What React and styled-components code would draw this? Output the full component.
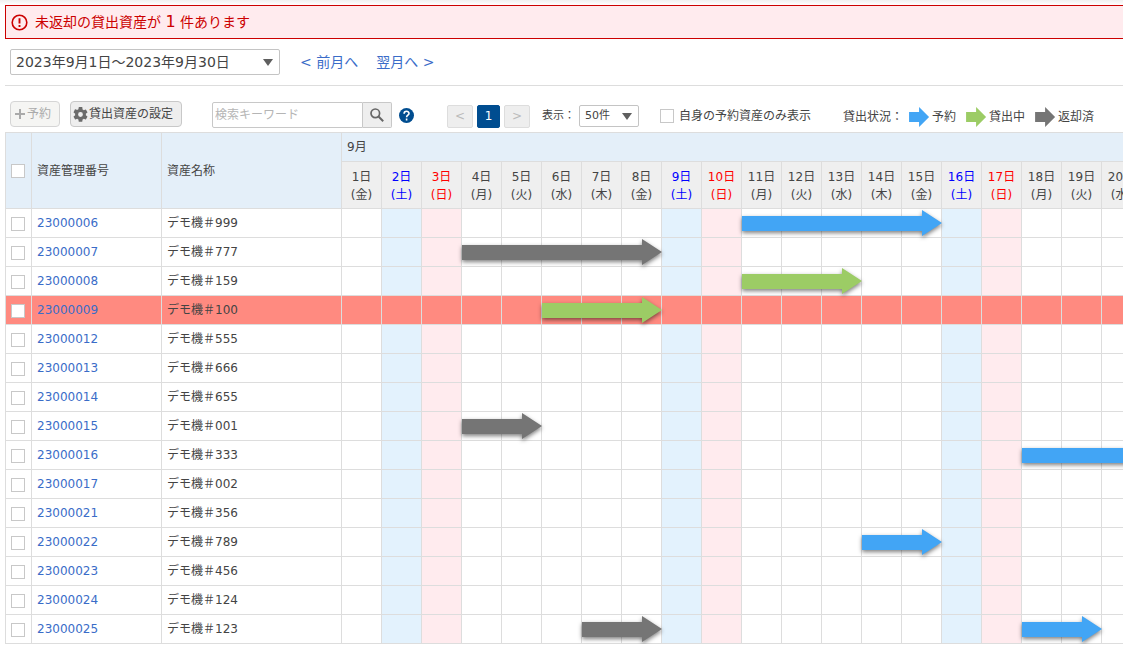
import React, { useState } from 'react';
import styled, { createGlobalStyle } from 'styled-components';

const GlobalStyle = createGlobalStyle`
  *, *::before, *::after {
    box-sizing: border-box;
  }

  body {
    margin: 0;
    background: #fff;
    color: #444;
    font-family: 'DejaVu Sans', 'Noto Sans CJK JP', sans-serif;
    font-size: 12px;
    line-height: 18px;
    overflow-x: hidden;
  }

  button, input, select {
    font: inherit;
    color: inherit;
  }
`

const Page = styled.div`
  padding: 5px 0 13px 5px;
  background: linear-gradient(#f0f0f0, #fff 5px);
`

const Alert = styled.div`
  display: flex;
  align-items: center;
  gap: 7px;
  height: 34px;
  padding: 0 5px;
  border: 1px solid #c00;
  border-right: none;
  background: #ffebee;
  color: #c00;
  font-size: 14px;

  p {
    margin: 0;
  }

  b {
    font-size: 16px;
    font-weight: normal;
  }
`

const PeriodBar = styled.div`
  display: flex;
  align-items: center;
  height: 47px;
  padding-left: 5px;
  border-bottom: 1px solid #ddd;
  font-size: 14px;
`

const SelectBox = styled.div`
  position: relative;
  width: ${props => props.$width}px;

  select {
    display: block;
    appearance: none;
    width: 100%;
    height: ${props => props.$height}px;
    padding: 0 5px;
    border: 1px solid #c4c4c4;
    border-radius: 2px;
    background: #fff;
  }

  &::after {
    content: '';
    position: absolute;
    right: 7px;
    top: 50%;
    margin-top: -3px;
    border: 5px solid transparent;
    border-top: 7px solid #5f5f5f;
    border-bottom: none;
    pointer-events: none;
  }
`

const MonthLinks = styled.nav`
  display: flex;
  gap: 18px;
  margin-left: 20px;
`

const Link = styled.a`
  color: #3a6cc8;
  text-decoration: none;
`

const Toolbar = styled.div`
  display: flex;
  align-items: center;
  height: 46px;
  padding: 14px 0 0 5px;
  white-space: nowrap;
`

const ToolButton = styled.button`
  display: flex;
  align-items: center;
  gap: 1px;
  height: 26px;
  margin: 0 10px 4px 0;
  padding: 0 8px 0 ${props => props.$wide ? 2 : 3}px;
  border: 1px solid #c8c8c8;
  border-radius: 4px;
  background: #eee;

  &:disabled {
    background: #f5f5f3;
    border-color: #d5d5d5;
    color: #aaa;
  }
`

const Search = styled.form`
  display: flex;
  margin: 0 7px 2px 20px;

  input {
    width: 151px;
    height: 26px;
    padding: 0 2px;
    border: 1px solid #c8c8c8;
    border-radius: 2px 0 0 2px;
  }

  input::placeholder {
    color: #b5b5b5;
  }

  button {
    display: flex;
    align-items: center;
    justify-content: center;
    width: 29px;
    padding: 0;
    border: 1px solid #c8c8c8;
    border-left: none;
    border-radius: 0 2px 2px 0;
    background: #eee;
  }
`

const HelpButton = styled.button`
  display: flex;
  margin-bottom: 2px;
  padding: 0;
  border: none;
  background: none;
`

const Pager = styled.div`
  display: flex;
  gap: 4px;
  margin: 0 12px 0 33px;
`

const PageButton = styled.button`
  width: ${props => props.$current ? 23 : 26}px;
  height: 23px;
  padding: 0;
  border: 1px solid ${props => props.$current ? '#004d90' : '#ddd'};
  border-radius: 2px;
  background: ${props => props.$current ? '#004d90' : '#eee'};
  color: ${props => props.$current ? '#fff' : '#bbb'};
`

const PageSize = styled.div`
  display: flex;
  align-items: center;
  gap: 4px;
  font-size: 11px;
`

const Checkbox = styled.input`
  display: block;
  appearance: none;
  width: 14px;
  height: 14px;
  margin: 0;
  border: 1px solid #c8c8c8;
  background: #fff;

  &:checked {
    background: #004d90;
    box-shadow: inset 0 0 0 2px #fff;
  }
`

const OwnOnly = styled.label`
  display: flex;
  align-items: center;
  gap: 5px;
  margin-left: 21px;
`

const Legend = styled.div`
  display: flex;
  align-items: center;
  gap: 10px;
  margin: 2px 0 0 32px;

  > span:first-child {
    margin-right: -4px;
  }
`

const LegendItem = styled.span`
  display: flex;
  align-items: center;
  gap: 3px;
`

const Chart = styled.div`
  overflow: hidden;
`

const Table = styled.table`
  table-layout: fixed;
  width: 1537px;
  border-collapse: separate;
  border-spacing: 0;

  th, td {
    padding: 0 5px;
    border: 0 solid #ddd;
    border-width: 0 1px 1px 0;
    font-weight: normal;
    text-align: left;
  }

  tr > .check {
    border-left-width: 1px;
  }

  thead tr:first-child th {
    border-top-width: 1px;
    background: #e4eff9;
  }

  thead tr:first-child {
    height: 30px;
  }

  thead tr:last-child {
    height: 47px;
  }
`

const textColors = { sat: '#00f', sun: '#f00' }
const cellColors = { sat: '#e3f2fd', sun: '#ffebee' }

const DayHead = styled.th`
  && {
    padding: 2px 0 0;
    text-align: center;
  }
  background: #efefef;
  color: ${props => textColors[props.$kind] || '#444'};
`

const Row = styled.tr`
  height: 29px;
  background: ${props => props.$overdue ? '#ff8a80' : '#fff'};

  .check {
    padding-top: 2px;
  }
`

const DayCell = styled.td`
  && {
    position: relative;
    padding: 0;
  }
  background: ${props => !props.$overdue && cellColors[props.$kind]};
`

const Lane = styled.div`
  position: absolute;
  z-index: 1;
  top: 1px;
  left: 0;
  width: ${props => props.$days * 40}px;
  filter: drop-shadow(0 2px 2px rgba(0, 0, 0, 0.5));
`

const Arrow = styled.div`
  height: 26px;
  background: ${props => props.$color};
  clip-path: polygon(0 6px, calc(100% - 20px) 6px, calc(100% - 20px) 0, 100% 13px,
    calc(100% - 20px) 100%, calc(100% - 20px) 21px, 0 21px);
`

const LegendArrow = styled.span`
  width: 20px;
  height: 20px;
  background: ${props => props.$color};
  clip-path: polygon(0 5px, 10px 5px, 10px 0, 100% 50%, 10px 100%, 10px 15px, 0 15px);
`

const colors = { reserved: '#42a5f5', lent: '#9ccc65', returned: '#757575' }
const week = ['木', '金', '土', '日', '月', '火', '水']

const days = Array.from({ length: 30 }, (_, i) => {
  const name = week[(i + 1) % 7]
  return { day: i + 1, name, kind: name === '土' ? 'sat' : name === '日' ? 'sun' : 'week' }
})

const assets = [
  { id: '23000006', name: 'デモ機＃999', loans: [{ start: 11, days: 5, status: 'reserved' }] },
  { id: '23000007', name: 'デモ機＃777', loans: [{ start: 4, days: 5, status: 'returned' }] },
  { id: '23000008', name: 'デモ機＃159', loans: [{ start: 11, days: 3, status: 'lent' }] },
  { id: '23000009', name: 'デモ機＃100', overdue: true, loans: [{ start: 6, days: 3, status: 'lent' }] },
  { id: '23000012', name: 'デモ機＃555', loans: [] },
  { id: '23000013', name: 'デモ機＃666', loans: [] },
  { id: '23000014', name: 'デモ機＃655', loans: [] },
  { id: '23000015', name: 'デモ機＃001', loans: [{ start: 4, days: 2, status: 'returned' }] },
  { id: '23000016', name: 'デモ機＃333', loans: [{ start: 18, days: 5, status: 'reserved' }] },
  { id: '23000017', name: 'デモ機＃002', loans: [] },
  { id: '23000021', name: 'デモ機＃356', loans: [] },
  { id: '23000022', name: 'デモ機＃789', loans: [{ start: 14, days: 2, status: 'reserved' }] },
  { id: '23000023', name: 'デモ機＃456', loans: [] },
  { id: '23000024', name: 'デモ機＃124', loans: [] },
  { id: '23000025', name: 'デモ機＃123', loans: [{ start: 7, days: 2, status: 'returned' }, { start: 18, days: 2, status: 'reserved' }] },
]

function AlertIcon(){
  return(
    <svg width="17" height="17" viewBox="0 0 17 17" fill="none" stroke="#c00">
      <circle cx="8.5" cy="8.5" r="7.3" strokeWidth="1.6" />
      <path d="M8.5 4.2v5.2M8.5 11v1.9" strokeWidth="1.9" />
    </svg>
  )
}

function PlusIcon(){
  return(
    <svg width="12" height="12" viewBox="0 0 12 12" stroke="#aaa" strokeWidth="2">
      <path d="M6 1v10M1 6h10" />
    </svg>
  )
}

function GearIcon(){
  return(
    <svg width="15" height="15" viewBox="2 2 20 20" fill="#6b6b6b">
      <path d="M19.14 12.94c.04-.3.06-.61.06-.94s-.02-.64-.07-.94l2.03-1.58a.49.49 0 0 0 .12-.61l-1.92-3.32a.49.49 0 0 0-.59-.22l-2.39.96a7 7 0 0 0-1.62-.94l-.36-2.54A.48.48 0 0 0 13.92 2h-3.84a.48.48 0 0 0-.47.41l-.36 2.54c-.59.24-1.13.57-1.62.94l-2.39-.96a.48.48 0 0 0-.59.22L2.74 8.87a.48.48 0 0 0 .12.61l2.03 1.58c-.05.3-.09.63-.09.94s.02.64.07.94l-2.03 1.58a.49.49 0 0 0-.12.61l1.92 3.32c.12.22.37.29.59.22l2.39-.96c.5.38 1.03.7 1.62.94l.36 2.54c.05.24.24.41.48.41h3.84c.24 0 .44-.17.47-.41l.36-2.54a7 7 0 0 0 1.62-.94l2.39.96c.22.08.47 0 .59-.22l1.92-3.32a.48.48 0 0 0-.12-.61zM12 15.2a3.2 3.2 0 1 1 0-6.4 3.2 3.2 0 0 1 0 6.4" />
    </svg>
  )
}

function SearchIcon(){
  return(
    <svg width="14" height="14" viewBox="0 0 14 14" fill="none" stroke="#666">
      <circle cx="5.3" cy="5.3" r="4.3" strokeWidth="1.7" />
      <path d="M8.5 8.5l4.7 4.7" strokeWidth="2" />
    </svg>
  )
}

function HelpIcon(){
  return(
    <svg width="15" height="15" viewBox="0 0 15 15">
      <circle cx="7.5" cy="7.5" r="7.5" fill="#004d90" />
      <path d="M5.1 5.7c0-3.3 4.9-3.1 4.9-.3 0 1.8-2.4 1.9-2.4 3.9M7.6 10.5v1.9" fill="none" stroke="#fff" strokeWidth="1.6" />
    </svg>
  )
}

function AssetRow({ asset, checked, onCheck }){
  return(
    <Row $overdue={asset.overdue}>
      <td className='check'>
        <Checkbox type='checkbox' aria-label={asset.id} checked={checked} onChange={() => onCheck(asset.id)} />
      </td>
      <td><Link href='#'>{asset.id}</Link></td>
      <td>{asset.name}</td>
      {days.map(({ day, kind }) => {
        const loan = asset.loans.find(x => x.start === day)
        return(
          <DayCell key={day} $kind={kind} $overdue={asset.overdue}>
            {loan && <Lane $days={loan.days}><Arrow $color={colors[loan.status]} /></Lane>}
          </DayCell>
        )
      })}
    </Row>
  )
}

function App(){
  const [selected, setSelected] = useState([])
  const [keyword, setKeyword] = useState('')
  const [ownOnly, setOwnOnly] = useState(false)

  function handleCheck(id){
    setSelected(selected.includes(id) ? selected.filter(x => x !== id) : [...selected, id])
  }

  function handleCheckAll(e){
    setSelected(e.target.checked ? assets.map(x => x.id) : [])
  }

  return(
    <Page>
      <GlobalStyle />
      <Alert role='alert'>
        <AlertIcon />
        <p>未返却の貸出資産が <b>1</b> 件あります</p>
      </Alert>

      <PeriodBar>
        <SelectBox $width={270} $height={26}>
          <select aria-label='期間'>
            <option>2023年9月1日～2023年9月30日</option>
          </select>
        </SelectBox>
        <MonthLinks>
          <Link href='#'>&lt; 前月へ</Link>
          <Link href='#'>翌月へ &gt;</Link>
        </MonthLinks>
      </PeriodBar>

      <Toolbar>
        <ToolButton disabled><PlusIcon />予約</ToolButton>
        <ToolButton $wide><GearIcon />貸出資産の設定</ToolButton>
        <Search onSubmit={e => e.preventDefault()}>
          <input type='text' aria-label='検索キーワード' placeholder='検索キーワード' value={keyword} onChange={e => setKeyword(e.target.value)} />
          <button aria-label='検索'><SearchIcon /></button>
        </Search>
        <HelpButton aria-label='ヘルプ'><HelpIcon /></HelpButton>
        <Pager>
          <PageButton disabled>&lt;</PageButton>
          <PageButton $current>1</PageButton>
          <PageButton disabled>&gt;</PageButton>
        </Pager>
        <PageSize>
          <label htmlFor='size'>表示：</label>
          <SelectBox $width={60} $height={22}>
            <select id='size'>
              <option>50件</option>
            </select>
          </SelectBox>
        </PageSize>
        <OwnOnly>
          <Checkbox type='checkbox' checked={ownOnly} onChange={e => setOwnOnly(e.target.checked)} />
          自身の予約資産のみ表示
        </OwnOnly>
        <Legend>
          <span>貸出状況：</span>
          <LegendItem><LegendArrow $color={colors.reserved} />予約</LegendItem>
          <LegendItem><LegendArrow $color={colors.lent} />貸出中</LegendItem>
          <LegendItem><LegendArrow $color={colors.returned} />返却済</LegendItem>
        </Legend>
      </Toolbar>

      <Chart>
        <Table>
          <colgroup>
            <col style={{ width: 27 }} />
            <col style={{ width: 130 }} />
            <col style={{ width: 180 }} />
            {days.map(x => <col key={x.day} />)}
          </colgroup>
          <thead>
            <tr>
              <th className='check' rowSpan='2'>
                <Checkbox type='checkbox' aria-label='すべて選択' checked={selected.length === assets.length} onChange={handleCheckAll} />
              </th>
              <th rowSpan='2'>資産管理番号</th>
              <th rowSpan='2'>資産名称</th>
              <th colSpan='30'>9月</th>
            </tr>
            <tr>
              {days.map(x => (
                <DayHead key={x.day} $kind={x.kind}>{x.day}日<br />({x.name})</DayHead>
              ))}
            </tr>
          </thead>
          <tbody>
            {assets.map(x => (
              <AssetRow key={x.id} asset={x} checked={selected.includes(x.id)} onCheck={handleCheck} />
            ))}
          </tbody>
        </Table>
      </Chart>
    </Page>
  )
}

export default App;
